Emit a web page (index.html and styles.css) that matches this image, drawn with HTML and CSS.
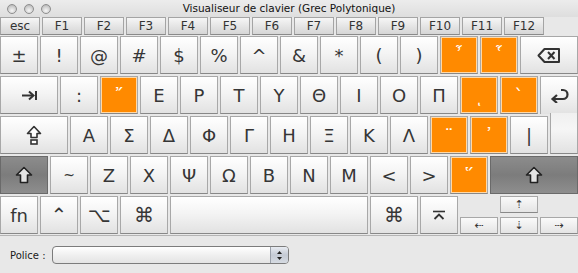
FILE: index.html
```html
<!DOCTYPE html>
<html lang="fr">
<head>
<meta charset="utf-8">
<title>Visualiseur de clavier</title>
<link rel="stylesheet" href="styles.css">
</head>
<body>
<div class="window">
  <div class="titlebar">
    <div class="lights"><span class="light"></span><span class="light"></span><span class="light"></span></div>
    <div class="title">Visualiseur de clavier (Grec Polytonique)</div>
    <div></div>
  </div>
  <div class="frow">
    <div class="fkey">esc</div><div class="fkey">F1</div><div class="fkey">F2</div><div class="fkey">F3</div><div class="fkey">F4</div><div class="fkey">F5</div><div class="fkey">F6</div><div class="fkey">F7</div><div class="fkey">F8</div><div class="fkey">F9</div><div class="fkey">F10</div><div class="fkey">F11</div><div class="fkey">F12</div>
  </div>
  <div class="keyboard">
    <div class="row">
      <div class="key">±</div><div class="key">!</div><div class="key">@</div><div class="key">#</div><div class="key">$</div><div class="key">%</div><div class="key">^</div><div class="key">&amp;</div><div class="key">*</div><div class="key">(</div><div class="key">)</div>
      <div class="key dead">῏</div><div class="key dead">῟</div>
      <div class="key w58">
        <svg width="24" height="17" viewBox="0 0 24 17"><path d="M1.5 8.5 L7.5 2 H22 V15 H7.5 Z" fill="none" stroke="#333" stroke-width="2" stroke-linejoin="round"/><path d="M11 5 L17.5 12 M17.5 5 L11 12" stroke="#333" stroke-width="2"/></svg>
      </div>
    </div>
    <div class="row">
      <div class="key w58">
        <svg width="17" height="11" viewBox="0 0 17 11"><path d="M1 5.5 H12" stroke="#333" stroke-width="2"/><path d="M8 1.5 L12.5 5.5 L8 9.5" fill="none" stroke="#333" stroke-width="2"/><path d="M15 1 V10" stroke="#333" stroke-width="2"/></svg>
      </div>
      <div class="key">:</div><div class="key dead">῎</div><div class="key">Ε</div><div class="key">Ρ</div><div class="key">Τ</div><div class="key">Υ</div><div class="key">Θ</div><div class="key">Ι</div><div class="key">Ο</div><div class="key">Π</div>
      <div class="key dead">ͺ</div><div class="key dead">`</div>
      <div class="key ret-top">
        <svg width="19" height="15" viewBox="0 0 19 15"><path d="M4 11 H13 A4.5 4.5 0 0 0 13 2 H11" fill="none" stroke="#333" stroke-width="2.2"/><path d="M7 7 L2.5 11 L7 15" fill="none" stroke="#333" stroke-width="2.2"/></svg>
      </div>
    </div>
    <div class="row">
      <div class="key w68">
        <svg width="16" height="20" viewBox="0 0 16 20"><path d="M8 1.5 L14.5 8.5 H11 V12.5 H5 V8.5 H1.5 Z" fill="#fff" stroke="#333" stroke-width="1.6" stroke-linejoin="round"/><rect x="5" y="15" width="6" height="4" fill="#fff" stroke="#333" stroke-width="1.6"/></svg>
      </div>
      <div class="key">Α</div><div class="key">Σ</div><div class="key">Δ</div><div class="key">Φ</div><div class="key">Γ</div><div class="key">Η</div><div class="key">Ξ</div><div class="key">Κ</div><div class="key">Λ</div>
      <div class="key dead">¨</div><div class="key dead">᾿</div><div class="key">|</div>
      <div class="key ret-bottom"></div>
    </div>
    <div class="row">
      <div class="key shift w48">
        <svg width="18" height="18" viewBox="0 0 18 18"><path d="M9 1.5 L16.5 9 H12.5 V16.5 H5.5 V9 H1.5 Z" fill="#e4e4e4" stroke="#222" stroke-width="1.6" stroke-linejoin="round"/></svg>
      </div>
      <div class="key small">~</div><div class="key">Ζ</div><div class="key">Χ</div><div class="key">Ψ</div><div class="key">Ω</div><div class="key">Β</div><div class="key">Ν</div><div class="key">Μ</div><div class="key">&lt;</div><div class="key">&gt;</div>
      <div class="key dead">῞</div>
      <div class="key shift w88">
        <svg width="18" height="18" viewBox="0 0 18 18"><path d="M9 1.5 L16.5 9 H12.5 V16.5 H5.5 V9 H1.5 Z" fill="#e4e4e4" stroke="#222" stroke-width="1.6" stroke-linejoin="round"/></svg>
      </div>
    </div>
    <div class="row">
      <div class="key">fn</div><div class="key sym">⌃</div><div class="key sym">⌥</div><div class="key sym w48">⌘</div>
      <div class="key w198"></div>
      <div class="key sym w48">⌘</div>
      <div class="key">
        <svg width="14" height="10" viewBox="0 0 14 10"><path d="M1 1.5 H13" stroke="#333" stroke-width="1.6"/><path d="M2.5 9 L7 4.5 L11.5 9" fill="none" stroke="#333" stroke-width="1.8"/></svg>
      </div>
      <div class="arrows">
        <div class="akey up">⇡</div>
        <div class="akey left">⇠</div>
        <div class="akey down">⇣</div>
        <div class="akey right">⇢</div>
      </div>
    </div>
  </div>
  <div class="footer">
    <span class="label">Police :</span>
    <div class="select">
      <div class="select-arrows">
        <svg width="7" height="11" viewBox="0 0 7 11"><path d="M3.5 1 L6 4 H1 Z" fill="#222"/><path d="M3.5 10 L6 7 H1 Z" fill="#222"/></svg>
      </div>
    </div>
  </div>
</div>
</body>
</html>
```
FILE: styles.css
```css
html, body {
  margin: 0;
  padding: 0;
}
body {
  width: 578px;
  height: 273px;
  overflow: hidden;
  background: #e8e8e8;
  font-family: "DejaVu Sans", sans-serif;
  color: #3a3a3a;
}
.window {
  display: flex;
  flex-direction: column;
}
.titlebar {
  height: 17px;
  display: grid;
  grid-template-columns: 1fr auto 1fr;
  align-items: center;
  background: linear-gradient(#ececec, #dedede);
}
.lights {
  display: flex;
  gap: 7px;
  padding-left: 7px;
}
.light {
  width: 10px;
  height: 10px;
  border-radius: 50%;
  border: 1px solid #8e8e8e;
  background: radial-gradient(circle at 50% 70%, #f6f6f6 0%, #d0d0d0 55%, #a8a8a8 100%);
  box-sizing: border-box;
}
.title {
  font-size: 10.5px;
  color: #111;
  line-height: 17px;
}
.frow {
  display: flex;
  gap: 2px;
  height: 18px;
  margin-bottom: 1px;
}
.fkey {
  width: 40px;
  box-sizing: border-box;
  border: 1px solid #a4a4a4;
  border-bottom-color: #8a8a8a;
  background: linear-gradient(#f6f6f6, #e2e2e2 60%, #d6d6d6);
  font-size: 12px;
  display: flex;
  align-items: center;
  justify-content: center;
  color: #333;
}
.keyboard {
  display: flex;
  flex-direction: column;
  gap: 2px;
}
.row {
  display: flex;
  gap: 2px;
  height: 38px;
}
.key {
  width: 38px;
  flex: none;
  box-sizing: border-box;
  border: 1px solid #a8a8a8;
  border-bottom-color: #888;
  background: linear-gradient(#ffffff, #f4f4f4 45%, #e2e2e2);
  display: flex;
  align-items: center;
  justify-content: center;
  font-size: 18px;
  color: #363636;
}
.key.small { font-size: 14px; }
.key.sym { font-size: 20px; }
.w48 { width: 48px; }
.w58 { width: 58px; }
.w68 { width: 68px; }
.w88 { width: 88px; }
.w198 { width: 198px; }
.key.dead {
  background: #ff8a00;
  color: #fff;
  box-shadow: inset 0 0 0 1px #ffd9a8;
}
.key.shift {
  background: linear-gradient(#8c8c8c, #7c7c7c 50%, #8e8e8e);
  border-color: #6a6a6a;
}
.key.ret-top {
  border-bottom: none;
}
.key.ret-bottom {
  width: 28px;
  border-top: none;
  margin-top: -3px;
  height: 41px;
  background: linear-gradient(#f0f0f0, #f6f6f6 40%, #e2e2e2);
}
.arrows {
  width: 118px;
  display: grid;
  grid-template-columns: 38px 38px 38px;
  grid-template-rows: 17px 17px;
  column-gap: 2px;
  row-gap: 4px;
}
.akey {
  box-sizing: border-box;
  border: 1px solid #a8a8a8;
  border-bottom-color: #888;
  background: linear-gradient(#fafafa, #e4e4e4);
  display: flex;
  align-items: center;
  justify-content: center;
  font-size: 11px;
  color: #333;
}
.akey.up { grid-column: 2; grid-row: 1; }
.akey.left { grid-column: 1; grid-row: 2; }
.akey.down { grid-column: 2; grid-row: 2; }
.akey.right { grid-column: 3; grid-row: 2; }
.footer {
  height: 39px;
  display: flex;
  align-items: center;
  padding-left: 10px;
  gap: 6px;
  border-top: 1px solid #b4b4b4;
  box-sizing: border-box;
  margin-top: 1px;
}
.label {
  font-size: 10px;
  color: #1a1a1a;
}
.select {
  width: 237px;
  height: 18px;
  box-sizing: border-box;
  border: 1px solid #7c7c7c;
  border-radius: 4px;
  background: linear-gradient(#ffffff, #f0f0f0 50%, #e4e4e4);
  display: flex;
  justify-content: flex-end;
  overflow: hidden;
}
.select-arrows {
  width: 17px;
  border-left: 1px solid #9aa0aa;
  background: linear-gradient(#e8ecf2, #c4cad4 50%, #d6dbe2);
  display: flex;
  align-items: center;
  justify-content: center;
}
```
